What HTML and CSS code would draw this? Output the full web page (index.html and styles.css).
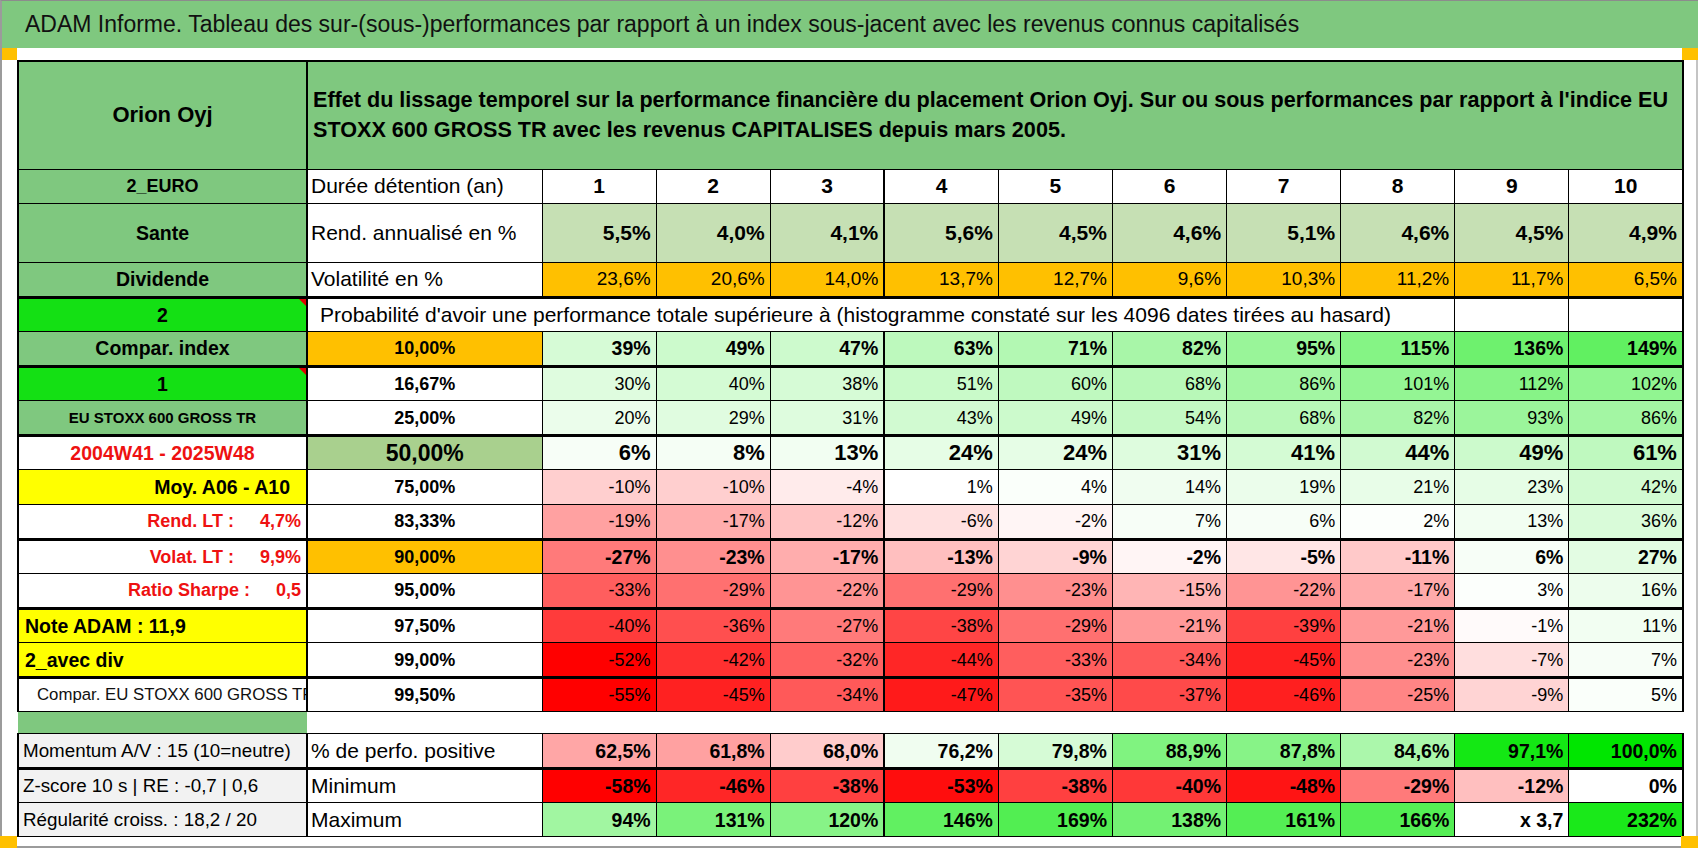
FILE: index.html
```html
<!DOCTYPE html>
<html lang="fr">
<head>
<meta charset="utf-8">
<title>ADAM Informe</title>
<link rel="stylesheet" href="styles.css">
</head>
<body>
<div class="frame">
  <div class="title">ADAM Informe. Tableau des sur-(sous-)performances par rapport à un index sous-jacent avec les revenus connus capitalisés</div>
  <div class="sheet">
    <span class="corner tl"></span><span class="corner tr"></span><span class="corner bl"></span><span class="corner br"></span>
    <table class="grid">
      <colgroup>
        <col class="w1"><col class="w2">
        <col class="wd"><col class="wd"><col class="wd"><col class="wd"><col class="wd">
        <col class="wd"><col class="wd"><col class="wd"><col class="wd"><col class="wd">
      </colgroup>
      <tbody>
        <tr class="r-head">
          <td class="c1 green name">Orion Oyj</td>
          <td class="green headtext last" colspan="11">Effet du lissage temporel sur la performance financière du placement Orion Oyj. Sur ou sous performances par rapport à l'indice EU<br>STOXX 600 GROSS TR avec les revenus CAPITALISES depuis mars 2005.</td>
        </tr>
        <tr class="r-years">
          <td class="c1 green lab lab-sm">2_EURO</td>
          <td class="desc">Durée détention (an)</td>
          <td class="v">1</td><td class="v">2</td><td class="v">3</td><td class="v v4">4</td><td class="v">5</td>
          <td class="v">6</td><td class="v">7</td><td class="v">8</td><td class="v">9</td><td class="v last">10</td>
        </tr>
        <tr class="r-tall r-rend">
          <td class="c1 green lab">Sante</td>
          <td class="desc">Rend. annualisé en %</td>
          <td class="v">5,5%</td><td class="v">4,0%</td><td class="v">4,1%</td><td class="v v4">5,6%</td><td class="v">4,5%</td>
          <td class="v">4,6%</td><td class="v">5,1%</td><td class="v">4,6%</td><td class="v">4,5%</td><td class="v last">4,9%</td>
        </tr>
        <tr class="r-vol">
          <td class="c1 green lab">Dividende</td>
          <td class="desc">Volatilité en %</td>
          <td class="v">23,6%</td><td class="v">20,6%</td><td class="v">14,0%</td><td class="v v4">13,7%</td><td class="v">12,7%</td>
          <td class="v">9,6%</td><td class="v">10,3%</td><td class="v">11,2%</td><td class="v">11,7%</td><td class="v last">6,5%</td>
        </tr>
        <tr class="tk">
          <td class="c1 bright lab note">2</td>
          <td class="prob" colspan="9">Probabilité d'avoir une performance totale supérieure à (histogramme constaté sur les 4096 dates tirées au hasard)</td>
          <td class="v"></td><td class="v last"></td>
        </tr>
        <tr class="pb">
          <td class="c1 green lab">Compar. index</td>
          <td class="pct org">10,00%</td>
          <td class="v" style="background:#d6fbd6">39%</td><td class="v" style="background:#ccfacc">49%</td><td class="v" style="background:#cdfacd">47%</td><td class="v v4" style="background:#bdf9bd">63%</td><td class="v" style="background:#b3f8b3">71%</td>
          <td class="v" style="background:#a8f6a8">82%</td><td class="v" style="background:#99f599">95%</td><td class="v" style="background:#85f485">115%</td><td class="v" style="background:#6ef16e">136%</td><td class="v last" style="background:#61f061">149%</td>
        </tr>
        <tr class="tk pr">
          <td class="c1 bright lab note">1</td>
          <td class="pct">16,67%</td>
          <td class="v" style="background:#dffcdf">30%</td><td class="v" style="background:#d4fbd4">40%</td><td class="v" style="background:#d6fbd6">38%</td><td class="v v4" style="background:#c9fac9">51%</td><td class="v" style="background:#bff9bf">60%</td>
          <td class="v" style="background:#b8f8b8">68%</td><td class="v" style="background:#a3f6a3">86%</td><td class="v" style="background:#94f594">101%</td><td class="v" style="background:#87f387">112%</td><td class="v last" style="background:#91f591">102%</td>
        </tr>
        <tr class="pr">
          <td class="c1 green lab lab-xs">EU STOXX 600 GROSS TR</td>
          <td class="pct">25,00%</td>
          <td class="v" style="background:#ebfdeb">20%</td><td class="v" style="background:#e0fce0">29%</td><td class="v" style="background:#defcde">31%</td><td class="v v4" style="background:#d1fad1">43%</td><td class="v" style="background:#ccfacc">49%</td>
          <td class="v" style="background:#c4f9c4">54%</td><td class="v" style="background:#b8f8b8">68%</td><td class="v" style="background:#a8f6a8">82%</td><td class="v" style="background:#9bf59b">93%</td><td class="v last" style="background:#a3f6a3">86%</td>
        </tr>
        <tr class="tk p50">
          <td class="c1 lab red">2004W41 - 2025W48</td>
          <td class="pct big sage">50,00%</td>
          <td class="v" style="background:#f7fef7">6%</td><td class="v" style="background:#f5fef5">8%</td><td class="v" style="background:#f2fef2">13%</td><td class="v v4" style="background:#e6fde6">24%</td><td class="v" style="background:#e6fde6">24%</td>
          <td class="v" style="background:#defcde">31%</td><td class="v" style="background:#d4fbd4">41%</td><td class="v" style="background:#d1fad1">44%</td><td class="v" style="background:#ccfacc">49%</td><td class="v last" style="background:#bff9bf">61%</td>
        </tr>
        <tr class="pr">
          <td class="c1 yel lab moy">Moy. A06 - A10</td>
          <td class="pct">75,00%</td>
          <td class="v" style="background:#ffcfcf">-10%</td><td class="v" style="background:#ffcfcf">-10%</td><td class="v" style="background:#ffebeb">-4%</td><td class="v v4" style="background:#ffffff">1%</td><td class="v" style="background:#fafffa">4%</td>
          <td class="v" style="background:#f0fdf0">14%</td><td class="v" style="background:#ebfdeb">19%</td><td class="v" style="background:#e8fde8">21%</td><td class="v" style="background:#e6fde6">23%</td><td class="v last" style="background:#d1fad1">42%</td>
        </tr>
        <tr class="pr">
          <td class="c1 lab kpi red">Rend. LT :<span class="gapv">4,7%</span></td>
          <td class="pct">83,33%</td>
          <td class="v" style="background:#ffa1a1">-19%</td><td class="v" style="background:#ffadad">-17%</td><td class="v" style="background:#ffc4c4">-12%</td><td class="v v4" style="background:#ffe0e0">-6%</td><td class="v" style="background:#fff5f5">-2%</td>
          <td class="v" style="background:#f7fef7">7%</td><td class="v" style="background:#f7fef7">6%</td><td class="v" style="background:#fcfffc">2%</td><td class="v" style="background:#f2fef2">13%</td><td class="v last" style="background:#d9fbd9">36%</td>
        </tr>
        <tr class="tk pb">
          <td class="c1 lab kpi red">Volat. LT :<span class="gapv">9,9%</span></td>
          <td class="pct org">90,00%</td>
          <td class="v" style="background:#ff7a7a">-27%</td><td class="v" style="background:#ff8f8f">-23%</td><td class="v" style="background:#ffadad">-17%</td><td class="v v4" style="background:#ffbfbf">-13%</td><td class="v" style="background:#ffd4d4">-9%</td>
          <td class="v" style="background:#fff5f5">-2%</td><td class="v" style="background:#ffe6e6">-5%</td><td class="v" style="background:#ffc9c9">-11%</td><td class="v" style="background:#f7fef7">6%</td><td class="v last" style="background:#e3fce3">27%</td>
        </tr>
        <tr class="pr">
          <td class="c1 lab kpi red">Ratio Sharpe :<span class="gapv">0,5</span></td>
          <td class="pct">95,00%</td>
          <td class="v" style="background:#ff5e5e">-33%</td><td class="v" style="background:#ff7070">-29%</td><td class="v" style="background:#ff9494">-22%</td><td class="v v4" style="background:#ff7070">-29%</td><td class="v" style="background:#ff8f8f">-23%</td>
          <td class="v" style="background:#ffb5b5">-15%</td><td class="v" style="background:#ff9494">-22%</td><td class="v" style="background:#ffabab">-17%</td><td class="v" style="background:#fcfffc">3%</td><td class="v last" style="background:#edfded">16%</td>
        </tr>
        <tr class="tk pr">
          <td class="c1 yel lab left">Note ADAM : 11,9</td>
          <td class="pct">97,50%</td>
          <td class="v" style="background:#ff3b3b">-40%</td><td class="v" style="background:#ff4f4f">-36%</td><td class="v" style="background:#ff7a7a">-27%</td><td class="v v4" style="background:#ff4545">-38%</td><td class="v" style="background:#ff7070">-29%</td>
          <td class="v" style="background:#ff9999">-21%</td><td class="v" style="background:#ff4040">-39%</td><td class="v" style="background:#ff9999">-21%</td><td class="v" style="background:#fffafa">-1%</td><td class="v last" style="background:#f2fef2">11%</td>
        </tr>
        <tr class="pr">
          <td class="c1 yel lab left">2_avec div</td>
          <td class="pct">99,00%</td>
          <td class="v" style="background:#ff0000">-52%</td><td class="v" style="background:#ff3030">-42%</td><td class="v" style="background:#ff6161">-32%</td><td class="v v4" style="background:#ff2626">-44%</td><td class="v" style="background:#ff5e5e">-33%</td>
          <td class="v" style="background:#ff5959">-34%</td><td class="v" style="background:#ff2121">-45%</td><td class="v" style="background:#ff8f8f">-23%</td><td class="v" style="background:#ffdede">-7%</td><td class="v last" style="background:#f7fef7">7%</td>
        </tr>
        <tr class="tk pr">
          <td class="c1 compar">Compar. EU STOXX 600 GROSS TR</td>
          <td class="pct">99,50%</td>
          <td class="v" style="background:#ff0000">-55%</td><td class="v" style="background:#ff2121">-45%</td><td class="v" style="background:#ff5959">-34%</td><td class="v v4" style="background:#ff1a1a">-47%</td><td class="v" style="background:#ff5454">-35%</td>
          <td class="v" style="background:#ff4a4a">-37%</td><td class="v" style="background:#ff1f1f">-46%</td><td class="v" style="background:#ff8585">-25%</td><td class="v" style="background:#ffd4d4">-9%</td><td class="v last" style="background:#fafffa">5%</td>
        </tr>
        <tr class="r-gap">
          <td class="gapc green"></td>
          <td class="gapr" colspan="11"></td>
        </tr>
        <tr class="r-low pb">
          <td class="c1 grey stat">Momentum A/V : 15 (10=neutre)</td>
          <td class="desc">% de perfo. positive</td>
          <td class="v" style="background:#ffa6a6">62,5%</td><td class="v" style="background:#ffa1a1">61,8%</td><td class="v" style="background:#ffcccc">68,0%</td><td class="v v4" style="background:#f0fdf0">76,2%</td><td class="v" style="background:#d6fbd6">79,8%</td>
          <td class="v" style="background:#80f380">88,9%</td><td class="v" style="background:#87f387">87,8%</td><td class="v" style="background:#abf7ab">84,6%</td><td class="v" style="background:#14e814">97,1%</td><td class="v last" style="background:#00e600">100,0%</td>
        </tr>
        <tr class="r-low tk pb">
          <td class="c1 grey stat">Z-score 10 s | RE : -0,7 | 0,6</td>
          <td class="desc">Minimum</td>
          <td class="v" style="background:#ff0000">-58%</td><td class="v" style="background:#ff2626">-46%</td><td class="v" style="background:#ff4040">-38%</td><td class="v v4" style="background:#ff0d0d">-53%</td><td class="v" style="background:#ff4040">-38%</td>
          <td class="v" style="background:#ff3838">-40%</td><td class="v" style="background:#ff1414">-48%</td><td class="v" style="background:#ff7a7a">-29%</td><td class="v" style="background:#ffbfbf">-12%</td><td class="v last" style="background:#ffffff">0%</td>
        </tr>
        <tr class="r-low pb">
          <td class="c1 grey stat">Régularité croiss. : 18,2 / 20</td>
          <td class="desc">Maximum</td>
          <td class="v" style="background:#a1f6a1">94%</td><td class="v" style="background:#7af27a">131%</td><td class="v" style="background:#87f387">120%</td><td class="v v4" style="background:#61f061">146%</td><td class="v" style="background:#52ee52">169%</td>
          <td class="v" style="background:#73f173">138%</td><td class="v" style="background:#54ee54">161%</td><td class="v" style="background:#54ee54">166%</td><td class="v" style="background:#ffffff">x 3,7</td><td class="v last" style="background:#1ae91a">232%</td>
        </tr>
      </tbody>
    </table>
  </div>
</div>
</body>
</html>
```

FILE: styles.css
```css
* { box-sizing: border-box; }
html, body { margin: 0; padding: 0; }
body {
  width: 1698px;
  height: 848px;
  overflow: hidden;
  background: #ffffff;
  color: #000000;
  font-family: "Liberation Sans", Arial, sans-serif;
}
.frame {
  width: 1698px;
  height: 848px;
  border-top: 1px solid #8c8c8c;
  border-left: 2px solid #9b9b9b;
  display: flex;
  flex-direction: column;
}
.title {
  flex: none;
  height: 47px;
  background: #7fc87f;
  font-size: 23px;
  line-height: 47px;
  padding: 0 0 0 23px;
  white-space: nowrap;
  overflow: hidden;
  color: #111;
}
.sheet {
  flex: 1;
  position: relative;
  padding: 12px 0 0 15px;
  border-right: 2px solid #c4c4c4;
  border-bottom: 2px solid #9b9b9b;
}
.corner { position: absolute; background: #ffc000; }
.corner.tl { left: 0; top: 0; width: 15px; height: 12px; }
.corner.tr { right: -2px; top: 0; width: 16px; height: 12px; }
.corner.bl { left: -2px; bottom: -2px; width: 17px; height: 12px; }
.corner.br { right: -2px; bottom: -2px; width: 17px; height: 12px; }

.grid {
  border-collapse: collapse;
  table-layout: fixed;
  width: 1665px;
}
.w1 { width: 289px; }
.w2 { width: 235px; }
.wd { width: 114.1px; }

.grid tr { height: 34.57px; }
.grid tr.r-head { height: 108px; }
.grid tr.r-tall { height: 59px; }
.grid tr.r-gap { height: 22px; }
.grid tr.r-low { height: 34.33px; }

.grid td {
  border: 1px solid #000;
  padding: 0 5px;
  vertical-align: middle;
  white-space: nowrap;
  overflow: hidden;
  font-size: 18px;
  line-height: 22px;
}
.grid tr.r-head td { border-top: 2px solid #000; }
.grid tr.tk td { border-top: 3px solid #000; }
.grid td.c1 { border-left: 2px solid #000; border-right: 2px solid #000; }
.grid td.v4 { border-left: 2px solid #000; }
.grid td.last { border-right: 2px solid #000; }
.grid td.gapc, .grid td.gapr { border-left: none; border-right: none; }

.grid td.green { background: #7fc87f; }
.grid td.bright { background: #14e014; }
.grid td.yel { background: #ffff00; }
.grid td.grey { background: #f2f2f2; }
.grid td.org { background: #ffc000; }
.grid td.sage { background: #a9d08e; }
.grid td.red { color: #ee1111; }

.grid td.name { text-align: center; font-weight: bold; font-size: 22px; }
.grid td.headtext {
  font-weight: bold;
  font-size: 21.6px;
  line-height: 30px;
  padding-left: 5px;
}
.grid td.lab { font-weight: bold; font-size: 19.5px; text-align: center; }
.grid td.lab-sm { font-size: 18px; }
.grid td.lab-xs { font-size: 15px; }
.grid td.moy { text-align: right; padding-right: 16px; }
.grid td.kpi { text-align: right; padding-right: 5px; font-size: 18px; }
.grid td.left { text-align: left; padding-left: 6px; }
.gapv { margin-left: 26px; }
.grid td.note { position: relative; }
.grid td.note::after {
  content: "";
  position: absolute;
  top: 0;
  right: 0;
  border-top: 7px solid #e00000;
  border-left: 7px solid transparent;
}
.grid td.compar { font-size: 16.8px; padding-left: 18px; color: #111; text-overflow: clip; }
.grid td.stat { font-size: 18.8px; padding-left: 4px; }

.grid td.desc { font-size: 21px; padding-left: 3px; }
.grid td.prob { font-size: 21px; padding-left: 12px; }
.grid td.pct { text-align: center; font-weight: bold; font-size: 18px; }
.grid td.big { font-size: 23px; }

.grid td.v { text-align: right; }
.grid .r-years td.v { text-align: center; font-weight: bold; font-size: 21px; }
.grid .r-rend td.v { background: #c6e0b4; font-weight: bold; font-size: 21px; }
.grid .r-vol td.v { background: #ffc000; font-size: 19px; }
.grid .pr td.v { font-size: 18px; }
.grid .pb td.v { font-weight: bold; font-size: 19.5px; }
.grid .p50 td.v { font-weight: bold; font-size: 22px; }
```
